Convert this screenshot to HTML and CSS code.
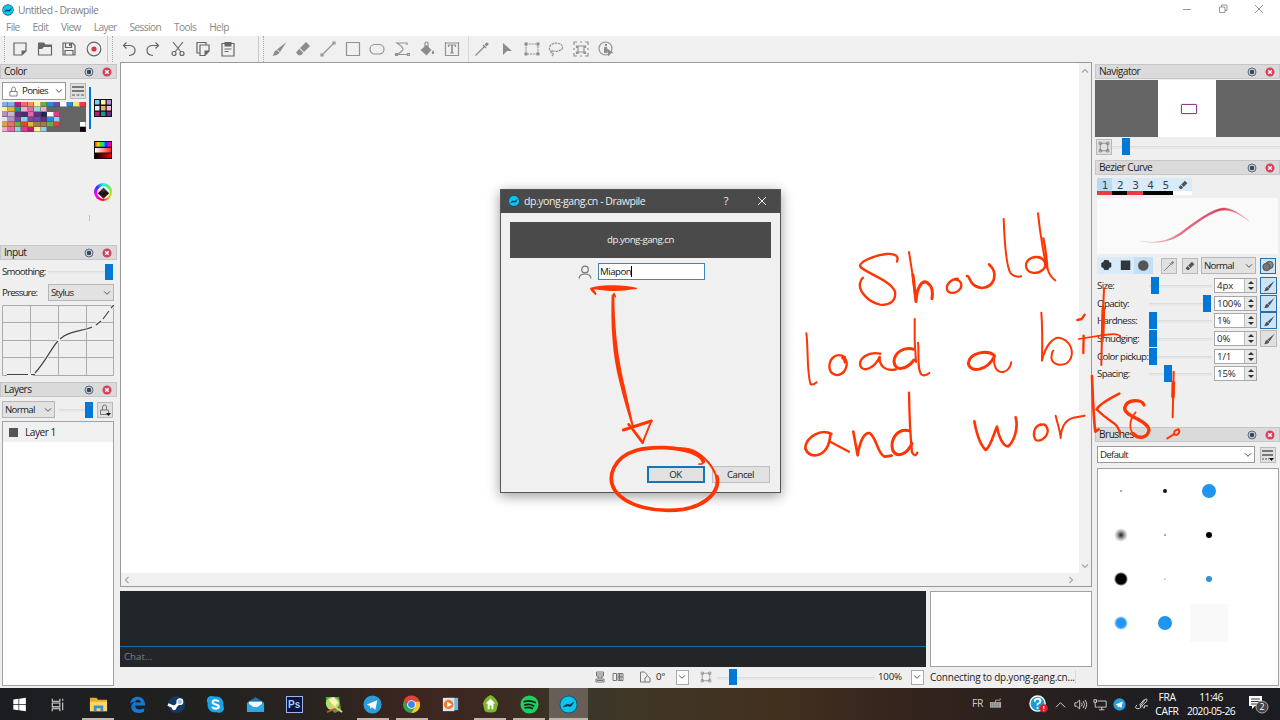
FILE: index.html
```
<!DOCTYPE html>
<html lang="en">
<head>
<meta charset="utf-8">
<title>Untitled - Drawpile</title>
<link rel="stylesheet" href="styles.css">
</head>
<body>
<svg class="defs" width="0" height="0">
  <defs>
    <linearGradient id="hue"><stop offset="0" stop-color="#f30"/><stop offset=".18" stop-color="#fd0"/><stop offset=".36" stop-color="#2e2"/><stop offset=".52" stop-color="#0dd"/><stop offset=".7" stop-color="#22f"/><stop offset=".86" stop-color="#e0e"/><stop offset="1" stop-color="#f03"/></linearGradient>
    <linearGradient id="sat"><stop offset="0" stop-color="#fff"/><stop offset="1" stop-color="#f22"/></linearGradient>
    <linearGradient id="val"><stop offset="0" stop-color="#000"/><stop offset="1" stop-color="#e00"/></linearGradient>
    <linearGradient id="strokefade"><stop offset="0" stop-color="#e0405a" stop-opacity=".1"/><stop offset=".35" stop-color="#e0405a" stop-opacity=".7"/><stop offset=".75" stop-color="#dc3c58"/><stop offset="1" stop-color="#e0405a" stop-opacity=".3"/></linearGradient>
  </defs>
  <symbol id="logo" viewBox="0 0 16 16"><circle cx="8" cy="8" r="7.600" fill="#12557a"/><circle cx="8" cy="8" r="6.800" fill="#0cc4ee"/><path d="M3.500 10 6 8l3 .3 3.500-2.300-2.500 3.500-3-.3z" fill="#15304a" stroke="#15304a" stroke-width=".6"/></symbol>
  <symbol id="float" viewBox="0 0 10 10"><circle cx="5" cy="5" r="4" fill="#c3cad1" stroke="#5b6a7b"/><rect x="3" y="3" width="4" height="4" rx="1" fill="#34495e"/></symbol>
  <symbol id="close" viewBox="0 0 10 10"><circle cx="5" cy="5" r="4.500" fill="#d6405a"/><path d="m3.200 3.200 3.600 3.600m0-3.600L3.200 6.800" stroke="#fff" stroke-width="1.400"/></symbol>
  <symbol id="chev" viewBox="0 0 8 6"><path d="m1 1.300 3 3 3-3" fill="none" stroke="#555" stroke-width="1"/></symbol>
  <symbol id="brush" viewBox="0 0 16 16"><path d="M15.500 1 9 11 6 8.500zM5.500 9l3 2.500c-1 2.500-4.500 3-7 3.500 1.500-1.500 1.200-5 4-6z"/></symbol>
  <symbol id="eraser" viewBox="0 0 16 16"><path d="m11 1 4 4-6 6-4-4zM4.200 7.800l4 4-2.200 2.400H3.500L1 11.500z"/></symbol>
  <symbol id="dropper" viewBox="0 0 16 16"><path d="m10.500 3.500 2-2q2.500 0 2 2l-2 2z" fill="currentColor"/><path d="M9 4 12 7" stroke="currentColor" stroke-width="1.300"/><path d="M10.500 5.500 3 13l-1.500 1.500" fill="none" stroke="currentColor" stroke-width="1.300"/></symbol>
  <symbol id="frame" viewBox="0 0 16 16"><path d="M3 3h10v10H3zM1.500 1.500h3v3h-3zm10 0h3v3h-3zm-10 10h3v3h-3zm10 0h3v3h-3z" fill="none" stroke="currentColor"/></symbol>
  <symbol id="lines" viewBox="0 0 12 12"><path d="M0 2h12M0 6h12" stroke="#555" stroke-width="1.300"/><path d="M0 10h12" stroke="#555" stroke-width="1.200" stroke-dasharray="3 1.500"/></symbol>
  <symbol id="lock" viewBox="0 0 10 12"><path d="M1 6h8v5H1zM3 6V3q0-2 2-2t2 2v3" fill="none" stroke="#777"/></symbol>
  <symbol id="telegram" viewBox="0 0 20 20"><circle cx="10" cy="10" r="9.500" fill="#2a9dda"/><path d="m4 10 11-4.500-2 10-3.500-2.500-2 1.500-.3-3z" fill="#fff"/></symbol>
</svg>

<div class="app">
  <header class="titlebar">
    <svg class="logo"><use href="#logo"/></svg><span class="wtitle">Untitled - Drawpile</span>
    <div class="winbtns">
      <svg viewBox="0 0 10 10"><path d="M1 5.500h8"/></svg>
      <svg viewBox="0 0 10 10"><path d="M1.500 3h5.500v5.500H1.500zM3.500 3V1h5.500v5.500H7"/></svg>
      <svg viewBox="0 0 10 10"><path d="m1 1 8 8m0-8L1 9"/></svg>
    </div>
  </header>
  <nav class="menubar"><span>File</span><span>Edit</span><span>View</span><span>Layer</span><span>Session</span><span>Tools</span><span>Help</span></nav>

  <div class="toolbar">
    <div class="tools g1">
      <svg viewBox="0 0 16 16"><path class="l" d="M2 2h12v8l-4 4H2z"/><path d="M14.500 9.500 9.500 14.500v-5z"/></svg>
      <svg viewBox="0 0 16 16"><path class="l" d="M1.500 5h13v9h-13z"/><path d="M1 1.500h6l1.500 2H15V6H7L5 8H1z"/></svg>
      <svg viewBox="0 0 16 16"><path class="l" d="M2 2h9.500L14 4.500V14H2zM4.500 2v4.500h6V2M4 14V9.500h8V14"/><path d="M8 2h1.800v3H8z"/></svg>
      <svg viewBox="0 0 16 16"><circle class="l" cx="8" cy="8" r="6.800"/><circle cx="8" cy="8" r="2.600" fill="#d23c50"/></svg>
    </div>
    <div class="tools g2">
      <svg viewBox="0 0 16 16"><path class="l" d="M5.500 1.500 2.500 4.500l3 3M2.500 4.500H9q5 .5 5 5t-6 5"/></svg>
      <svg viewBox="0 0 16 16"><path class="l" d="m10.500 1.500 3 3-3 3M13.500 4.500H7q-5 .5-5 5t6 5"/></svg>
      <svg viewBox="0 0 16 16"><path class="l" d="m3 1 8 10M13 1 5 11"/><circle class="l" cx="4" cy="12.500" r="2"/><circle class="l" cx="12" cy="12.500" r="2"/></svg>
      <svg viewBox="0 0 16 16"><path class="l" d="M5 12H2V1.500h9V4M5 4h9v6l-4 4.500H5z"/><path d="M14.500 9.500 9.500 14.500v-5z"/></svg>
      <svg viewBox="0 0 16 16"><path class="l" d="M2 2.500h12V15H2zM4.500 8h7m-7 2.500h4"/><path d="M4.500 1h7v4.500h-7z"/></svg>
    </div>
    <div class="tools g3">
      <svg><use href="#brush"/></svg>
      <svg><use href="#eraser"/></svg>
      <svg viewBox="0 0 16 16"><path class="l" d="M2 14 14 2M1 13h2v2H1zM13 1h2v2h-2z"/></svg>
      <svg viewBox="0 0 16 16"><path class="l" d="M1.500 1.500h13v13h-13z"/></svg>
      <svg viewBox="0 0 16 16"><rect class="l" x="1" y="3.500" width="14" height="9.500" rx="4.700"/></svg>
      <svg viewBox="0 0 16 16"><path class="l" d="M13 4V2H3q6 4 6 6t-6 5.500h11M1.500 12.500h2v2h-2zm12 0h2v2h-2z"/></svg>
      <svg viewBox="0 0 16 16"><path class="l" d="M6 8V2q2-2 3 0v4"/><path d="m1.500 9 6-5 5 5-5 5.500zM14 9q2.500 4 0 4t0-4z"/></svg>
      <svg viewBox="0 0 16 16"><path class="l" d="M1.500 1v14m13-14v14M1.500 2h13m-13 12.500h13M4.500 6V4h7v2M6 12h4"/><path d="M7.200 4h1.600v8H7.200z"/></svg>
    </div>
    <div class="tools g4">
      <svg><use href="#dropper"/></svg>
      <svg viewBox="0 0 16 16"><path d="m4 2 9 8H8l-4 4z"/></svg>
      <svg viewBox="0 0 16 16"><path class="l" d="M2 3h12v10H2z" stroke-dasharray="2 .8"/><path d="M.5 1.500h3v3h-3zm12 0h3v3h-3zm-12 10h3v3h-3zm12 0h3v3h-3z"/></svg>
      <svg viewBox="0 0 16 16"><path class="l" d="M4.500 11Q0 9 2 5q3-4 9-2.500 5 2 3 5.500-4 3.500-8.500 2Q3 9 3 11t2 1.500q1 1-1 2.500" stroke-dasharray="2.500 .7"/></svg>
      <svg viewBox="0 0 16 16"><path class="l" d="M1 4V1h3m8 0h3v3m0 8v3h-3m-8 0H1v-3M1 7v2m14-2v2M7 1h2m-2 14h2M5 5h6v6H5zM3.500 6.500H5V5H3.500zM11 5h1.500v1.500H11zm-6 6H3.500v1.500H5zm6 0h1.500v1.500H11z"/></svg>
      <svg viewBox="0 0 16 16"><circle class="l" cx="7.500" cy="7.500" r="6.500"/><path d="M7 3h2v2H7zM6 6h3v6H6z"/><path d="m8.500 7 7 5-3 .5-2 3z"/></svg>
    </div>
  </div>

  <div class="main">
    <aside class="left">
      <section class="dock color">
        <h2>Color<svg><use href="#float"/></svg><svg><use href="#close"/></svg></h2>
        <div class="colorbody">
          <div class="pal">
            <div class="palrow"><div class="combo ponies"><svg class="lk"><use href="#lock"/></svg><span>Ponies</span><svg class="chev"><use href="#chev"/></svg></div><div class="btn"><svg class="ic12"><use href="#lines"/></svg></div></div>
            <div class="palette" id="palette"></div>
          </div>
          <div class="vbar"><i></i><b></b></div>
          <div class="modes">
            <svg viewBox="0 0 18 18"><path fill="#111" d="M0 0h18v18H0z"/><path fill="#79cdf0" d="M1 1h4.500v4.500H1z"/><path fill="#fff59a" d="M7 1h4.500v4.500H7z"/><path fill="#b48ccd" d="M12.700 1H17v4.500h-4.300z"/><path fill="#eee" d="M1 7h4.500v4.500H1z"/><path fill="#f5ad60" d="M7 7h4.500v4.500H7z"/><path fill="#f6b6d6" d="M12.700 7H17v4.500h-4.300z"/><path fill="#c4177a" d="M1 12.700h4.500V17H1z"/><path fill="#0e9d91" d="M7 12.700h4.500V17H7z"/><path fill="#6b2b88" d="M12.700 12.700H17V17h-4.300z"/></svg>
            <svg viewBox="0 0 18 18"><path fill="#111" d="M0 0h18v18H0z"/><path fill="url(#hue)" d="M1 1h16v4.700H1z"/><path fill="url(#sat)" d="M1 7h16v4.500H1z"/><path fill="url(#val)" d="M1 12.500h16V17H1z"/></svg>
            <div class="wheel"><i></i></div>
          </div>
        </div>
      </section>
      <section class="dock input">
        <h2>Input<svg><use href="#float"/></svg><svg><use href="#close"/></svg></h2>
        <div class="row smooth"><label>Smoothing:</label><div class="slider"><i class="end"></i></div></div>
        <div class="row press"><label>Pressure:</label><div class="combo gray"><span>Stylus</span><svg class="chev"><use href="#chev"/></svg></div></div>
        <svg class="curve" viewBox="0 0 112 71"><path d="M.5.500h111v70H.5zM28.500 0v70m28-70v70M84.500 0v70M0 17.500h111M0 35.500h111M0 52.500h111" fill="none" stroke="#ababab"/><path d="M5 69.500h25C40 64 48 43 58 34c12-11 28-4 40-18q6-8 13-15" fill="none" stroke="#efefef" stroke-width="3"/><path d="M5 69.500h21m3 0h4M33 68C44 56 50 42 56 36m2-2 4-3C72 25 82 26 90 22m4-2 5-4M101 14l6-8m2-3 3-3" fill="none" stroke="#444" stroke-width="1.200"/></svg>
      </section>
      <section class="dock layers">
        <h2>Layers<svg><use href="#float"/></svg><svg><use href="#close"/></svg></h2>
        <div class="row lay"><div class="combo gray"><span>Normal</span><svg class="chev"><use href="#chev"/></svg></div><div class="slider"><i class="end"></i></div><div class="btn"><svg class="ic12" viewBox="0 0 12 12"><path d="M1.500 6h8v4.500h-8zM3.500 6V3q0-2 2-2t2 2v3" fill="none" stroke="#777"/><path d="M7 9h5l-2.500 3z" fill="#111"/></svg></div></div>
        <div class="list"><div class="item"><i></i>Layer 1</div></div>
      </section>
    </aside>

    <main class="center">
      <div class="canvas">
        <div class="paper"></div>
        <div class="vscroll"><svg viewBox="0 0 8 6"><path d="m1 4.500 3-3 3 3"/></svg><svg viewBox="0 0 8 6"><path d="m1 1.500 3 3 3-3"/></svg></div>
        <div class="hscroll"><svg viewBox="0 0 6 8"><path d="m4.500 1-3 3 3 3"/></svg><svg viewBox="0 0 6 8"><path d="m1.500 1 3 3-3 3"/></svg></div>
      </div>
      <div class="chatrow"><div class="chat"><div class="log"></div><div class="say">Chat...</div></div><div class="users"></div></div>
      <div class="status">
        <svg class="s1" viewBox="0 0 12 12"><path d="M2.500 1h7v4h-7zM4 5v2h4V5M2 8h8v3H2zM3 3h6M3 9.500h6"/></svg>
        <svg class="s2" viewBox="0 0 12 12"><path d="M1 2.500h3.500v7H1zM6 2.500h5v7H6zM7.500 3v6M9 3v6M6 6h5"/></svg>
        <svg class="s3" viewBox="0 0 12 12"><path d="M6 11H1.500V1h4L8 3.500V5M6 11V7l2.500-2 2.500 2v4z"/></svg>
        <span class="deg">0°</span><div class="mini"><svg class="chev"><use href="#chev"/></svg></div>
        <svg class="s4" viewBox="0 0 16 16"><use href="#frame"/></svg>
        <div class="slider zoom"><i></i></div><span class="pct">100%</span><div class="mini"><svg class="chev"><use href="#chev"/></svg></div><span class="conn">Connecting to dp.yong-gang.cn...</span>
      </div>
    </main>

    <aside class="right">
      <section class="dock nav">
        <h2>Navigator<svg><use href="#float"/></svg><svg><use href="#close"/></svg></h2>
        <div class="preview"><div class="page"><i></i></div></div>
        <div class="row navrow"><div class="btn"><svg class="ic12"><use href="#frame"/></svg></div><div class="slider"><i></i></div></div>
      </section>
      <section class="dock bezier">
        <h2>Bezier Curve<svg><use href="#float"/></svg><svg><use href="#close"/></svg></h2>
        <div class="slots"><span class="red on">1</span><span>2</span><span class="red">3</span><span>4</span><span>5</span><span class="er"><svg class="ic10"><use href="#eraser"/></svg></span></div>
        <svg class="stroke" viewBox="0 0 181 56"><path d="M43 43q22 5 40-8c20-15 34-25 45-25q10 1 24 13-14-11-24-11c-11 0-26 11-43 24q-18 12-42 7z" fill="url(#strokefade)" stroke="url(#strokefade)" stroke-width=".5"/></svg>
        <div class="modebar">
          <div class="shapes"><svg viewBox="0 0 12 12"><path d="M4 1h4l1 2 2 1v4L9 9 8 11H4L3 9 1 8V4l2-1z"/></svg><svg viewBox="0 0 12 12"><path d="M1.500 1.500h9.500v9.500H1.500z"/></svg><svg class="on" viewBox="0 0 12 12"><circle cx="6" cy="6" r="5"/></svg></div>
          <div class="btn dp"><svg class="ic12"><use href="#dropper"/></svg></div><div class="btn"><svg class="ic10"><use href="#eraser"/></svg></div>
          <div class="combo gray"><span>Normal</span><svg class="chev"><use href="#chev"/></svg></div>
          <div class="btn act"><svg class="ic12" viewBox="0 0 12 12"><circle cx="7.500" cy="5" r="3.700" fill="#888" stroke="#555"/><circle cx="4.500" cy="7" r="3.700" fill="#777" stroke="#555"/></svg></div>
        </div>
        <div class="params">
          <div class="prm"><label>Size:</label><div class="slider p1"><i></i></div><div class="spin">4px<b></b></div><div class="btn act"><svg class="ic12"><use href="#brush"/></svg></div></div>
          <div class="prm"><label>Opacity:</label><div class="slider p2"><i></i></div><div class="spin">100%<b></b></div><div class="btn act"><svg class="ic12"><use href="#brush"/></svg></div></div>
          <div class="prm"><label>Hardness:</label><div class="slider p3"><i></i></div><div class="spin">1%<b></b></div><div class="btn act"><svg class="ic12"><use href="#brush"/></svg></div></div>
          <div class="prm"><label>Smudging:</label><div class="slider p3"><i></i></div><div class="spin">0%<b></b></div><div class="btn"><svg class="ic12"><use href="#brush"/></svg></div></div>
          <div class="prm"><label>Color pickup:</label><div class="slider p3"><i></i></div><div class="spin">1/1<b></b></div></div>
          <div class="prm"><label>Spacing:</label><div class="slider p4"><i></i></div><div class="spin">15%<b></b></div></div>
        </div>
      </section>
      <section class="dock brushes">
        <h2>Brushes<svg><use href="#float"/></svg><svg><use href="#close"/></svg></h2>
        <div class="row brow"><div class="combo"><span>Default</span><svg class="chev"><use href="#chev"/></svg></div><div class="btn"><svg class="ic12" viewBox="0 0 12 12"><path d="M0 2h11M0 6h11" stroke="#555" stroke-width="1.300"/><path d="M0 10h7" stroke="#555" stroke-width="1.200" stroke-dasharray="2 1"/><path d="M7 9h5l-2.500 3z" fill="#111"/></svg></div></div>
        <div class="dabs"><i class="tiny"></i><i class="sm"></i><i class="blue"></i><i class="soft"></i><i class="tiny"></i><i class="md"></i><i class="big"></i><i class="tiny faint"></i><i class="bluesm"></i><i class="bluesoft"></i><i class="blue"></i><i class="haze"></i></div>
      </section>
    </aside>
  </div>

  <footer class="taskbar">
    <div class="tb"><svg viewBox="0 0 20 20"><path fill="#fff" d="m3.500 4.800 5.500-.8v5.600H3.500zM9.700 3.900l7-.9v6.600h-7zM3.500 10.300H9V16l-5.500-.8zM9.700 10.300h7V17l-7-.9z"/></svg></div>
    <div class="tb"><svg viewBox="0 0 20 20"><path fill="none" stroke="#ddd" stroke-width="1.100" d="M4.500 4v2.500h8V4M4.500 8.500h8v4h-8zM4.500 17v-2.500h8V17M15.500 4v2m0 2v8"/></svg></div>
    <div class="tb run"><svg viewBox="0 0 20 20"><path fill="#e9a92c" d="M1 3h7l1.500 2H19v12H1z"/><path fill="#ffd663" d="M1 7h18v10H1z"/><path fill="#3f8fcf" d="M5 11h10v6h-3v-3H8v3H5z"/></svg></div>
    <div class="tb"><svg viewBox="0 0 20 20"><path fill="#1478d4" d="M2 9.500C3 4 7 1.500 11 2c5 .5 7 4 7 9H7.500c0 5 6 5 9.500 3v3.500C9 21 3 17 3.500 12 4 9 6 7.500 8 6.500 5 7 3 8 2 9.500zM7.500 8h6q-.5-3-3-3t-3 3z"/></svg></div>
    <div class="tb"><svg viewBox="0 0 20 20"><circle cx="10" cy="10" r="9" fill="#123864"/><path d="m1 10 7 3 5-5" stroke="#fff" stroke-width="3" fill="none"/><circle cx="13.500" cy="7" r="3" fill="#acc4dc" stroke="#fff" stroke-width="1.300"/><circle cx="7.500" cy="13.500" r="2.500" fill="#fff"/></svg></div>
    <div class="tb"><svg viewBox="0 0 20 20"><path fill="#17a5e6" d="M6 1q2 0 3 .7C16 .8 19 6 18.200 11 21 17 15 20 11 18.200 4 19 1 14 1.800 9-.5 5 2 1 6 1z"/><path d="M13.500 7C12 5 7 5 7 7.700c0 3 6.500 1.500 6.500 4.500 0 2.800-5.500 2.800-7 .3" stroke="#fff" stroke-width="2.200" fill="none"/></svg></div>
    <div class="tb"><svg viewBox="0 0 20 20"><path fill="#1670b8" d="M1 8l9-6 9 6v10H1z"/><path fill="#fff" d="M3 7h14v6H3z"/><path fill="#2fa6ea" d="m1 8 9 6 9-6v10H1z"/></svg></div>
    <div class="tb"><div class="ps">Ps</div></div>
    <div class="tb"><svg viewBox="0 0 20 20"><path fill="#4aa63b" d="M2 2h14l2 14-7 3L2 9z"/><circle cx="9" cy="9" r="7" fill="#b4dc6c"/><path fill="#fff3c0" d="m5 5 5-3 5 6-4 5z"/><path stroke="#c54a33" stroke-width="2" d="m3 18 13-5"/><path stroke="#eed27c" stroke-width="2" d="m8 10 11 8"/></svg></div>
    <div class="tb run"><svg><use href="#telegram"/></svg></div>
    <div class="tb run"><svg viewBox="0 0 20 20"><circle cx="10" cy="10" r="9" fill="#32a350"/><path fill="#e04436" d="M2 5.500a9 9 0 0 1 16 0L19 9h-9l-4 3z"/><path fill="#fbc51b" d="M10 19a9 9 0 0 0 8.500-12H12l2 5z"/><circle cx="10" cy="10" r="4.600" fill="#fff"/><circle cx="10" cy="10" r="3.600" fill="#4084f3"/></svg></div>
    <div class="tb"><svg viewBox="0 0 20 20"><path fill="#79b4dd" d="M6 3h12v13H6z"/><path fill="#d9e7f2" d="M2 3h12v14H2z"/><circle cx="8" cy="10" r="5" fill="#f07b25"/><path fill="#fff" d="m6.500 7 5 3-5 3z"/></svg></div>
    <div class="tb run"><svg viewBox="0 0 20 20"><path fill="#7cb928" d="M10 0c4 2 7 5 8 9l-2 8q-6 3-12 0L2 9c1-4 4-7 8-9z"/><path fill="#fff" d="m10 4 5 5h-2v6h-2v-4H9v4H7V9H5z"/></svg></div>
    <div class="tb run"><svg viewBox="0 0 20 20"><circle cx="10" cy="10" r="9.500" fill="#1ed05f"/><path fill="none" stroke="#17241b" stroke-width="1.800" stroke-linecap="round" d="M4.500 7q6-2 11.500 1M5 10.500q5-1.500 9.500 1M5.500 13.500q4-1 7.500.7"/></svg></div>
    <div class="tb run active"><svg><use href="#logo"/></svg></div>
    <div class="tray">
      <span class="fr">FR</span>
      <svg class="kb" viewBox="0 0 14 12"><path fill="#aaa" d="M1 5h12v6H1z"/><path stroke="#aaa" fill="none" d="M7 5V3h5V1"/><path stroke="#555" d="M2 7h10M2 9h10" stroke-dasharray="1 1"/></svg>
      <svg class="help" viewBox="0 0 20 20"><circle cx="9" cy="9" r="8" fill="#179bd7" stroke="#fff" stroke-width="1.500"/><path d="M6 7q0-3 3-3t3 2.500Q12 8 9 9.500V11m0 1.500v2" stroke="#fff" stroke-width="2" fill="none"/><circle cx="15.500" cy="14" r="4.300" fill="#e21c24"/><path d="M15.500 11.500v3m0 1v1" stroke="#fff" stroke-width="1.300"/></svg>
      <svg class="up" viewBox="0 0 12 12"><path d="m1 9 5-5 5 5"/></svg>
      <svg class="vol" viewBox="0 0 16 14"><path d="M1 5h2l3.500-3v10L3 9H1zM8.500 5q1.500 2 0 4m2-6q3 4 0 8m2-9.500q4 5.500 0 11"/></svg>
      <svg class="net" viewBox="0 0 16 14"><path d="M5 3h10v7H5M10 10v3m-3 0h6M1 1.500h3v3H1zM2.500 4.500V10h2"/></svg>
      <svg class="tg"><use href="#telegram"/></svg>
      <svg class="pen" viewBox="0 0 16 14"><path d="M3 8Q0 12 4 12t3-3L12 2q3-1 1.500 2L8 9.500 6 8l5-6M9 10q3 3 2-1l4 0"/></svg>
      <div class="lang">FRA<br>CAFR</div><div class="clock">11:46<br>2020-05-26</div>
      <div class="note"><svg viewBox="0 0 22 20"><path fill="#fff" d="M1 2h13v10H7l-3 3v-3H1z"/><path stroke="#333" d="M3 5h9M3 7.500h9M3 10h6"/><circle cx="14" cy="13" r="6" fill="#444" stroke="#aaa"/></svg><b>2</b></div>
    </div>
  </footer>
</div>

<div class="dialog">
  <div class="dtitle"><svg class="logo"><use href="#logo"/></svg><span>dp.yong-gang.cn - Drawpile</span><b>?</b><svg class="dx" viewBox="0 0 10 10"><path d="m1 1 8 8m0-8L1 9"/></svg></div>
  <div class="dbody">
    <div class="banner">dp.yong-gang.cn</div>
    <div class="user"><svg viewBox="0 0 14 14"><circle cx="7" cy="4.500" r="3.300"/><path d="M1 13.500Q1.500 9 7 9t6 4.500"/></svg><div class="field">Miapon<i></i></div></div>
    <div class="buttons"><div class="dbtn ok">OK</div><div class="dbtn">Cancel</div></div>
  </div>
</div>

<svg class="ink" viewBox="0 0 1280 720">
  <g transform="translate(580 280) scale(.33333)">
    <path class="fill" d="M30 24Q60 14 100 16 140 16 172 24 175 27 160 28 120 35 80 32 55 30 42 28L50 42 46 46 32 31z"/>
    <path d="M106 50 102 41Q99 46 98 56" stroke-width="5"/>
    <path class="fill" d="M95 44C92 130 96 220 119 310 131 360 144 400 156 440L161 437C150 390 142 350 131 305 110 210 104 130 103 44z"/>
    <path d="M130 450 214 423" stroke-width="9"/><path d="M214 423 188 488" stroke-width="6"/><path d="M146 433 156 445 188 488" stroke-width="8"/>
    <path d="M370 545C368 535 352 524 335 517 290 501 215 498 170 511 100 532 80 590 104 630 140 682 230 698 310 688 385 675 420 630 411 590" stroke-width="11"/><path d="M357 552Q372 554 371 540" stroke-width="5"/>
    <path d="M412 605C408 570 380 535 350 517 335 508 320 505 300 505" stroke-width="6"/>
  </g>
  <g transform="translate(790 200) scale(.33333)" stroke-width="7">
    <path d="M321 185C327 170 318 160 290 162 240 168 206 190 211 200 220 216 303 240 315 275 319 302 300 317 270 314 230 305 206 270 210 250Q212 238 219 233"/>
    <path d="M357 156 367 220 378 306" stroke-width="6"/><path d="M369 225 378 304C380 265 395 238 412 248 430 260 428 280 426 296" stroke-width="9"/>
    <path d="M503 236C484 237 468 252 471 268 475 284 500 281 511 266 520 248 506 237 494 239"/>
    <path d="M531 228C541 226 536 260 575 264 612 262 628 222 597 193" stroke-width="8"/>
    <path d="M641 57C643 110 648 200 662 220Q675 233 693 229" stroke-width="6"/>
    <path d="M744 40C750 100 765 190 772 205Q780 232 796 241" stroke-width="6"/><path d="M760 115Q768 150 772 205" stroke-width="7"/><path d="M763 182C740 160 708 175 708 198 710 220 740 226 760 208 774 192 760 168 735 171"/>
    <path d="M49 400C55 440 50 520 62 553Q70 556 80 547" stroke-width="6"/>
    <path d="M165 472C140 455 118 475 118 500 120 526 145 533 162 515 175 495 172 475 157 474M157 474Q165 478 164 487"/>
    <path d="M271 461C235 453 205 475 211 498 222 520 255 502 269 470 267 495 283 515 318 508"/>
    <path d="M372 448C340 438 312 460 312 485 315 516 350 509 372 480" stroke-width="9"/><path d="M374 357Q372 420 378 486M384 428C388 460 380 510 395 524Q405 530 418 519" stroke-width="6"/>
    <path d="M613 466C592 448 537 458 535 490 540 521 592 512 613 470" stroke-width="9"/><path d="M613 466C609 500 620 518 640 516Q660 510 664 487" stroke-width="6"/>
    <path d="M754 338C758 390 757 440 756 482 765 440 790 405 815 415 850 430 855 470 830 490 805 500 780 490 785 465Q787 453 790 452" stroke-width="6"/>
    <path d="M881 407 880 459M862 360 875 357 884 344"/>
    <path d="M942 268 936 400 934 495" stroke-width="6"/><path d="M940 325 938 408" stroke-width="11"/><path d="M866 417 930 407Q988 396 991 411" stroke-width="5"/>
    <path d="M124 702C95 685 47 710 46 745 57 780 115 775 121 705" stroke-width="8"/><path d="M122 726 177 755" stroke-width="7"/>
    <path d="M190 695 203 766C210 720 225 695 240 700 260 713 262 760 283 770L305 767" stroke-width="8"/>
    <path d="M357 692C320 685 300 720 308 750 320 775 350 765 366 730" stroke-width="9"/><path d="M357 578C358 640 360 700 366 757Q375 775 382 758" stroke-width="7"/>
    <path d="M553 664Q565 730 587 750C600 745 612 700 621 680 625 710 640 740 655 739 675 720 685 680 677 652" stroke-width="8"/>
    <path d="M752 673C730 680 728 705 737 720 755 728 778 705 772 685Q765 668 752 675"/>
    <path d="M797 647C805 680 812 700 812 714 812 690 822 660 850 653L884 647" stroke-width="6"/>
    <path d="M906 528C908 580 910 650 916 695L926 688" stroke-width="8"/><path d="M988 581Q930 610 920 628" stroke-width="8"/><path d="M920 628Q935 645 975 672 988 685 990 703"/>
    <path d="M1062 615C1055 596 1010 597 1004 624 1002 650 1075 660 1077 690 1073 715 1045 718 1030 701" stroke-width="10"/><path d="M1040 712C1010 690 1020 655 1037 637" stroke-width="5"/>
    <path d="M1151 515 1148 652" stroke-width="6"/><path d="M1150 548 1149 590" stroke-width="11"/>
    <path d="M1132 715 1153 702Q1150 690 1166 688 1172 698 1160 705L1150 703" stroke-width="6"/>
  </g>
</svg>
<script src="app.js"></script>
</body>
</html>
```
FILE: styles.css
```
* { box-sizing: border-box; }
body { margin: 0; width: 1280px; height: 720px; overflow: hidden; position: relative; font: 9.700px/14px "Open Sans", "Noto Sans", sans-serif; letter-spacing: -.5px; color: #1c1c1c; background: #efefef; }
.defs { position: absolute; }
svg { display: block; flex: none; }
.app { height: 720px; display: flex; flex-direction: column; }
.titlebar { height: 18px; flex: none; background: #fff; display: flex; align-items: center; padding: 1px 16px 0 2px; color: #808080; }
.logo { width: 12px; height: 12px; }
.wtitle { margin-left: 4px; font-size: 10.300px; letter-spacing: -.5px; line-height: 16px; }
.winbtns { margin-left: auto; display: flex; gap: 26px; }
.winbtns svg { width: 10px; height: 10px; fill: none; stroke: #8b8b8b; stroke-width: .9; margin-top: -2px; }
.menubar { height: 18px; flex: none; background: #fff; display: flex; padding: 2px 0 0 6px; color: #888; font-size: 10.200px; letter-spacing: -.6px; }
.menubar span { margin-right: 12.800px; }

.toolbar { height: 26px; flex: none; display: flex; align-items: center; background: #f0f0f0; color: #8c8c8c; }
.tools { display: flex; height: 26px; align-items: center; }
.tools svg { width: 16px; height: 16px; margin: 0 4.350px 1px; fill: #666; color: #8c8c8c; }
.tools .l { fill: none; stroke: #666; stroke-width: 1.200; }
.g3 svg, .g4 svg { fill: #8c8c8c; }
.g3 .l, .g4 .l { stroke: #929292; }
.g1, .g2, .g3 { border-left: 1px dotted #aaa; }
.g1 { margin-left: 4px; padding: 0 1.200px 0 2.500px; border-right: 1px solid #c8c8c8; }
.g2 { margin-left: 4px; padding: 0 18px 0 3px; border-right: 1px solid #c8c8c8; }
.g3 { margin-left: 4px; padding: 0 4px 0 2.500px; border-right: 1px solid #d8d8d8; }
.g4 { padding-left: 1px; }

.main { height: 626px; flex: none; display: flex; gap: 3px; background: #efefef; }
.left { width: 117px; display: flex; flex-direction: column; }
.center { width: 972px; display: flex; flex-direction: column; }
.right { width: 185px; display: flex; flex-direction: column; }
.dock h2 { margin: 2px 0 0; height: 15px; font-size: 10.200px; font-weight: 400; line-height: 13px; letter-spacing: -.55px; display: flex; align-items: center; padding: 0 4px 0 3px; background: #dadada; border: 1px solid #c6c6c6; gap: 8px; }
.dock h2 svg { width: 10px; height: 10px; }
.dock h2 svg:first-of-type { margin-left: auto; }
.row { display: flex; align-items: center; }
.combo { height: 17px; background: #fff; border: 1px solid #999; display: flex; align-items: center; padding: 0 2px 0 2px; letter-spacing: -.7px; }
.combo.gray { background: #e2e2e2; border-color: #b5b5b5; }
.chev { width: 8px; height: 6px; margin-left: auto; }
.btn { width: 16px; height: 16px; flex: none; background: #e0e0e0; border: 1px solid #b9b9b9; display: flex; align-items: center; justify-content: center; fill: #555; color: #777; }
.btn.act { background: #cce4f7; border-color: #2a6ea8; fill: #4a5560; }
.ic12 { width: 12px; height: 12px; }
.ic10 { width: 10px; height: 10px; }
.lk { width: 9px; height: 11px; }
.slider { height: 17px; position: relative; display: flex; align-items: center; background: linear-gradient(#dcdcdc, #dcdcdc) 0 50% / 100% 1px no-repeat, linear-gradient(#e7e7e7, #e7e7e7) 0 8px / 100% 3px no-repeat; }
.slider i { width: 8px; height: 16px; background: #0078d7; }
.slider .end { margin-left: auto; }

.color { height: 181px; }
.colorbody { display: flex; padding: 3px 0 0 2px; }
.pal { width: 85px; }
.palrow { display: flex; gap: 4px; align-items: center; margin-bottom: 2px; }
.ponies { width: 64px; height: 18px; padding-left: 6px; }
.ponies span { margin-left: 4px; }
.palette { width: 84px; height: 30px; background: #646464; display: grid; grid-template: repeat(6, 1fr) / repeat(13, 1fr); }
.palette .on { border: solid #4447; border-width: 0 1px 1px 0; }
.vbar { width: 3px; margin-left: 2px; height: 140px; padding-top: 5px; }
.vbar i { display: block; width: 2px; height: 42px; background: #0078d7; }
.vbar b { display: block; width: 1px; height: 6px; background: #c2c2c2; margin-top: 86px; }
.modes { margin: 17px 0 0 2px; display: flex; flex-direction: column; gap: 24px; }
.modes svg, .wheel { width: 18px; height: 18px; }
.wheel { border-radius: 50%; background: conic-gradient(#2ee, #3f5, #ae0 100deg, #fa0, #f03 180deg, #f0f 250deg, #33f 310deg, #2ee); padding: 2.500px; }
.wheel i { display: block; width: 13px; height: 13px; border-radius: 50%; background: linear-gradient(135deg, #555, #181010 50%, #601818) 50% / 8px 8px no-repeat, #eee; transform: rotate(45deg); }
.input { height: 137px; }
.input .row { padding-left: 2px; }
.smooth { margin-top: 3px; height: 17px; }
.row label { width: 46px; letter-spacing: -.8px; }
.smooth .slider { width: 65px; }
.press { margin-top: 4px; }
.press .combo { width: 66px; }
.curve { width: 112px; height: 71px; margin: 4px 0 0 2px; }
.layers { flex: 1; display: flex; flex-direction: column; }
.lay { margin: 4px 0 0 2px; }
.lay .combo { width: 53px; }
.lay .slider { width: 34px; margin: 0 4px 0 4px; }
.list { margin: 3px 0 2px 2px; width: 112px; flex: 1; background: #fff; border: 1px solid #a2a2a2; }
.item { height: 20px; background: #f0f0f0; display: flex; align-items: center; font-size: 10.200px; letter-spacing: -.5px; }
.item i { width: 9px; height: 9px; background: #555; margin: 0 7px 0 6px; }

.canvas { height: 525px; border: 1px solid #999; background: #f0f0f0; display: grid; grid-template: 1fr 13px / 1fr 12px; }
.paper { background: #fff; }
.vscroll, .hscroll { display: flex; justify-content: space-between; align-items: center; }
.vscroll { flex-direction: column; padding: 5px 1px 4px 0; }
.hscroll { padding: 0 5px 0 3px; }
.vscroll svg { width: 8px; height: 6px; }
.hscroll svg { width: 6px; height: 8px; }
.canvas svg { fill: none; stroke: #a6a6a6; stroke-width: 1.200; }
.chatrow { margin-top: 4px; height: 76px; display: flex; gap: 4px; }
.chat { width: 806px; background: #232629; display: flex; flex-direction: column; }
.log { height: 56px; border-bottom: 1px solid #1b6aa5; }
.say { color: #7d8184; padding: 3px 4px; letter-spacing: 0; }
.users { width: 162px; background: #fff; border: 1px solid #a2a2a2; }
.status { height: 20px; display: flex; align-items: center; padding-left: 474px; white-space: nowrap; letter-spacing: -.2px; }
.status > svg { fill: none; stroke: #777; width: 12px; height: 12px; color: #888; }
.status .s2 { margin-left: 6px; }
.status .s3 { margin-left: 15px; }
.deg { margin-left: 5px; width: 20px; }
.mini { width: 13px; height: 15px; background: #fff; border: 1px solid #aaa; display: flex; align-items: center; padding-right: 2px; }
.status .s4 { margin-left: 11px; width: 12px; height: 12px; }
.zoom { width: 158px; margin-left: 5px; padding-left: 12px; }
.pct { margin-left: 3px; width: 33px; }
.conn { margin-left: 6px; font-size: 10px; letter-spacing: -.23px; border-right: 1px solid #dadada; }

.nav { height: 96px; }
.preview { height: 57px; margin-top: 1px; background: #646464; display: flex; padding-left: 63px; }
.page { width: 58px; background: #fff; display: flex; align-items: center; justify-content: center; padding-left: 4px; }
.page i { width: 16px; height: 10px; border: 1.500px solid #8e3b91; border-radius: 1px; box-shadow: 0 0 1px #8e3b91; }
.navrow { padding-left: 1px; margin-top: 1px; }
.navrow .slider { flex: 1; padding-left: 10px; }
.navrow .slider i { height: 17px; }
.bezier { height: 267px; }
.slots { margin: 3px 0 0 2px; display: flex; width: 95px; height: 17px; background: #d9ebf9; }
.slots span { width: 15.200px; padding-left: 1px; text-align: center; border-bottom: 4px solid #000; font: 10.500px/15px "DejaVu Sans", sans-serif; letter-spacing: 0; color: #345; }
.slots .red { border-color: #e83b42; }
.slots .on { background: #b7dbf5; }
.slots .er { width: 19px; border-color: #fff; display: flex; align-items: center; justify-content: center; fill: #555; }
.stroke { width: 181px; height: 56px; margin: 3px 0 0 2px; background: #fafafa; }
.modebar { display: flex; margin: 3px 0 0 2px; height: 17px; align-items: center; }
.shapes { display: flex; width: 56px; height: 17px; background: #d9ebf9; fill: #31363b; }
.shapes svg { width: 18.600px; height: 16px; padding: 2px 3px; }
.shapes .on { background: #c3e0f6; height: 17px; fill: #555; }
.modebar .btn { margin-left: 4px; }
.modebar .dp { margin-left: 8px; margin-right: 1px; }
.modebar .combo { width: 55px; margin-left: 3px; }
.params { margin: 3px 0 0 2px; }
.prm { display: flex; align-items: center; height: 17.600px; white-space: nowrap; }
.prm label { width: 52px; padding-top: 1px; letter-spacing: -.6px; }
.prm .slider { width: 63px; }
.prm .slider i { height: 17px; }
.p1 { padding-left: 2px; }
.p2 { padding-left: 54px; }
.p4 { padding-left: 15px; }
.spin { width: 43px; height: 15px; margin-left: 2px; border: 1px solid #a8a8a8; background: #fff; line-height: 14px; padding-left: 2px; display: flex; letter-spacing: -.15px; }
.spin b { margin-left: auto; width: 12px; background: #e7e7e7; border-left: 1px solid #bbb; display: flex; flex-direction: column; align-items: center; justify-content: center; gap: 3px; }
.spin b::before, .spin b::after { content: ""; border: 3px solid transparent; border-top-width: 0; border-bottom: 3px solid #333; }
.spin b::after { border-bottom-width: 0; border-top: 3px solid #333; }
.prm .btn { margin-left: 3px; width: 17px; height: 17px; }
.brushes { flex: 1; display: flex; flex-direction: column; }
.brow { margin: 4px 0 0 2px; gap: 5px; }
.brow .combo { width: 158px; }
.dabs { margin: 5px 0 2px 2px; width: 182px; flex: 1; background: #fff; border: 1px solid #a2a2a2; display: grid; grid-template: repeat(4, 44px) / repeat(3, 44px); place-items: center; align-content: start; padding-left: 1px; }
.dabs i { border-radius: 50%; }
.dabs .tiny { width: 1.500px; height: 1.500px; background: #999; }
.dabs .faint { opacity: .5; }
.dabs .sm { width: 4px; height: 4px; background: #111; }
.dabs .md { width: 6px; height: 6px; background: #000; }
.dabs .big { width: 14px; height: 14px; background: radial-gradient(#000 50%, #0000 72%); }
.dabs .soft { width: 14px; height: 14px; background: radial-gradient(#222, #8888 45%, #0000 70%); }
.dabs .blue { width: 14px; height: 14px; background: #2095ee; }
.dabs .bluesm { width: 6px; height: 6px; background: #2e93dc; }
.dabs .bluesoft { width: 14px; height: 14px; background: radial-gradient(#2196f3 45%, #2196f300 72%); }
.dabs .haze { width: 38px; height: 38px; border-radius: 0; background: #f9f9f9; }

.taskbar { height: 32px; flex: none; display: flex; background: linear-gradient(90deg, #1b1d22, #20201f 180px, #2b2420 330px, #3d261f 415px, #3c2821 480px, #3a3628 590px, #403626 640px, #42301f 780px, #35241d 900px, #2c211e 1000px, #1f1e22 1150px, #1c1d22); color: #fff; }
.tb { width: 39.200px; display: flex; align-items: center; justify-content: center; border-bottom: 2px solid transparent; padding-top: 2px; position: relative; }
.tb:nth-child(-n+2) { width: 38.500px; }
.tb:nth-child(2) { margin-right: 1.700px; }
.tb svg { width: 19px; height: 19px; }
.run::after { content: ""; position: absolute; left: 3.500px; right: 3.500px; bottom: -2px; height: 2px; background: #c4b5ab; }
.active { background: #675f57; }
.active::after { left: 0; right: 0; }
.ps { width: 17px; height: 17px; border: 1px solid #9cb8e8; background: #0b1540; color: #a7cdff; font: bold 10px/15px "Liberation Sans", sans-serif; letter-spacing: 0; text-align: center; }
.tray { margin-left: auto; width: 308px; display: flex; align-items: center; font-size: 10.300px; line-height: 14px; letter-spacing: -.35px; }
.tray > svg { fill: none; stroke: #ddd; }
.fr { color: #ccc; width: 16px; margin-top: -3px; }
.tray .kb { width: 13px; height: 12px; stroke: none; margin-left: 1px; margin-top: -3px; }
.tray .help { width: 19px; height: 19px; stroke: none; margin-left: 27px; }
.tray .up { width: 11px; height: 11px; margin-left: 7px; }
.tray .vol { width: 14px; height: 13px; margin-left: 8px; }
.tray .net { width: 14px; height: 13px; margin-left: 5px; }
.tray .tg { width: 13px; height: 13px; stroke: none; margin-left: 6px; }
.tray .pen { width: 15px; height: 14px; margin-left: 8px; }
.lang, .clock { text-align: center; white-space: nowrap; margin-top: -1px; }
.lang { width: 26px; margin-left: 5px; }
.clock { width: 50px; margin-left: 6px; letter-spacing: -.55px; }
.note { margin-left: 12px; position: relative; }
.note svg { width: 22px; height: 20px; }
.note b { position: absolute; left: 11.500px; top: 6px; font-weight: 400; font-size: 9px; }

.dialog { position: absolute; left: 500px; top: 189px; width: 281px; height: 304px; border: 1px solid #555; background: #f0f0f0; box-shadow: 0 3px 12px #0006; display: flex; flex-direction: column; }
.dtitle { height: 23px; background: #4a4a4a; color: #eee; display: flex; align-items: center; padding: 0 13px 1px 7px; font-size: 10.500px; letter-spacing: -.45px; }
.dtitle span { margin-left: 4px; }
.dtitle b { font-weight: 400; margin-left: auto; margin-right: 29px; font-size: 11px; }
.dx { width: 10px; height: 10px; stroke: #eee; fill: none; }
.dbody { flex: 1; padding: 9px 9px 9px 9px; display: flex; flex-direction: column; }
.banner { height: 36px; background: #4a4a4a; color: #eee; text-align: center; line-height: 36px; }
.user { display: flex; margin: 5px 0 0 68px; gap: 6px; align-items: center; }
.user svg { width: 14px; height: 14px; fill: none; stroke: #777; stroke-width: 1.200; }
.field { width: 107px; height: 17px; border: 1px solid #3d85bd; background: #fff; padding-left: 1px; display: flex; align-items: center; color: #111; }
.field i { width: 1px; height: 11px; background: #000; }
.buttons { margin-top: auto; display: flex; gap: 7px; justify-content: flex-end; padding-right: 1px; }
.dbtn { width: 58px; height: 17px; border: 1px solid #bfbfbf; background: #e1e1e1; text-align: center; line-height: 15px; padding-right: 1px; }
.dbtn.ok { border: 2px solid #1874b8; line-height: 13px; }
.ink { position: absolute; left: 0; top: 0; width: 1280px; height: 720px; fill: none; stroke: #ff3503; stroke-linecap: round; stroke-linejoin: round; }
.ink .fill { fill: #ff3503; stroke: none; }
```
FILE: app.js
```
// Swatch rows of the "Ponies" palette; "." leaves a slot empty.
const colors = {
  a: '#79b5e8', b: '#c4177a', c: '#ec6b62', d: '#f0915e', e: '#fbf39a', f: '#65b04c',
  g: '#1c90e0', h: '#6d4ca5', w: '#ffffff', i: '#f7e36e', r: '#e93d42', j: '#e8b62c',
  k: '#0e9d91', l: '#f4a9cf', m: '#e565a8', n: '#93dcd8', p: '#b68fc0', q: '#c6b5da',
  s: '#662d88', t: '#403068', u: '#122a5c', v: '#d93d8e', x: '#e4e4ee', y: '#8bd0ee',
  z: '#a57c42', o: '#dda24a', K: '#000000'
};
const rows = ['aabcdefghwgir', 'ejklmnl......', 'pqstmsuwv....', 'xphyhhsgy....', 'ocfrjzzfr...w', 'lmyvbey.....K'];
const palette = document.getElementById('palette');
for (const row of rows) {
  for (const key of row) {
    const cell = document.createElement('span');
    if (key !== '.') {
      cell.className = 'on';
      cell.style.backgroundColor = colors[key];
    }
    palette.appendChild(cell);
  }
}
```
